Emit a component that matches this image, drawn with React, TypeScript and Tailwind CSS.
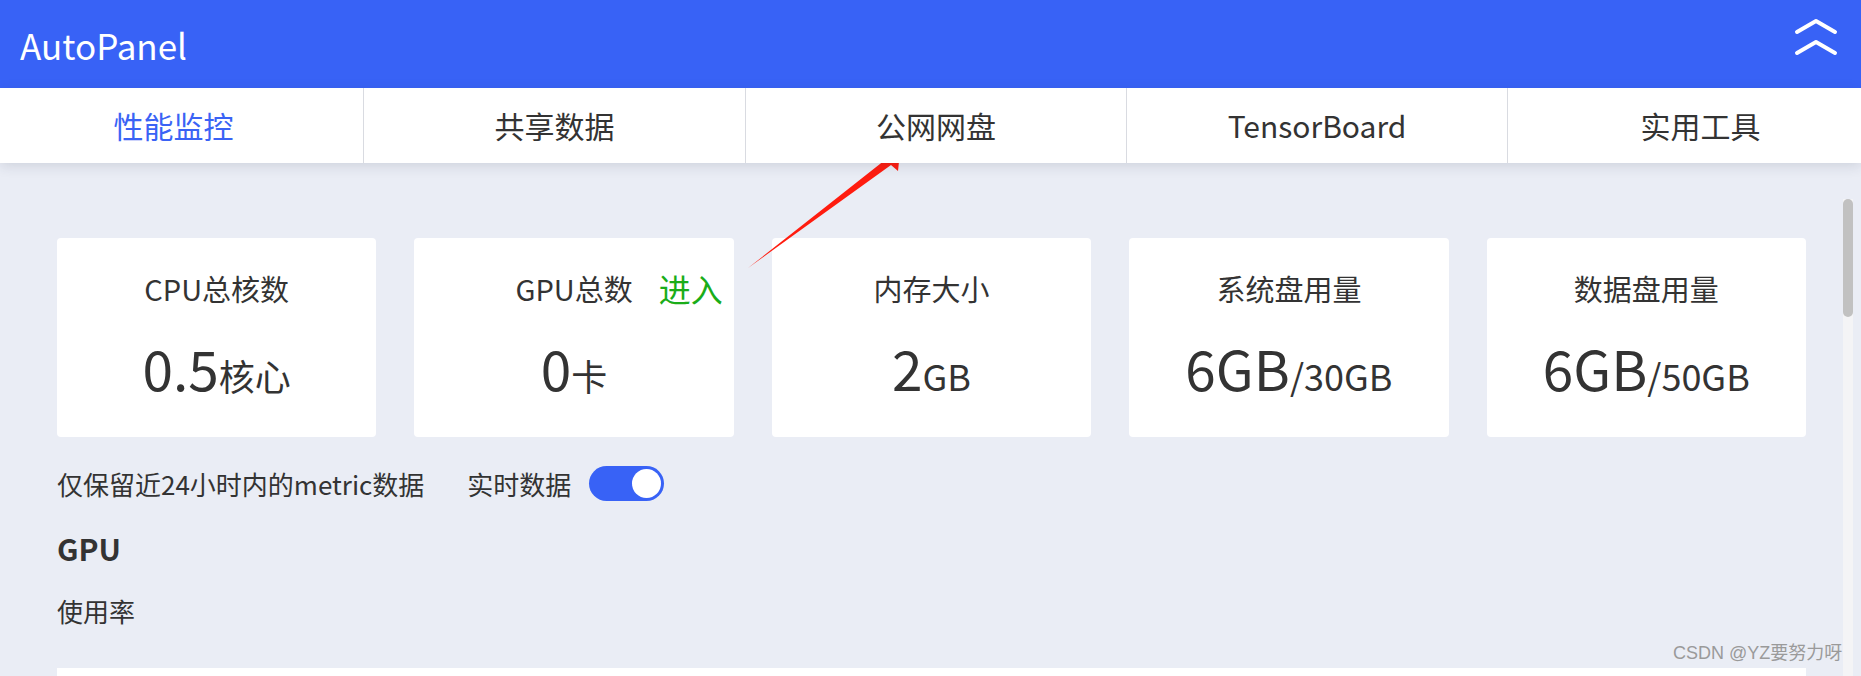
import React from "react";

const tabs = [
  { label: "性能监控", w: "w-[363px] pr-[16px]", active: true },
  { label: "共享数据", w: "w-[382px]" },
  { label: "公网网盘", w: "w-[381px]" },
  { label: "TensorBoard", w: "w-[381px]" },
  { label: "实用工具", w: "flex-1 pl-[32px]" },
];

const cards = [
  { title: "CPU总核数", value: "0.5", unit: "核心" },
  { title: "GPU总数", value: "0", unit: "卡", link: "进入" },
  { title: "内存大小", value: "2", unit: "GB" },
  { title: "系统盘用量", value: "6GB", unit: "/30GB" },
  { title: "数据盘用量", value: "6GB", unit: "/50GB" },
];

const StatCard = ({ title, value, unit, link }: { title: string; value: string; unit: string; link?: string }) => (
  <div className="h-[199px] bg-white rounded-[4px] flex flex-col items-center">
    <div className="relative mt-[30px] h-[40px] leading-[40px] text-[29px] text-[#333]">
      {title}
      {link && (
        <span className="absolute left-full top-0 ml-[26px] whitespace-nowrap text-[32px] text-[#1aad19]">{link}</span>
      )}
    </div>
    <div className="mt-[28px] flex items-baseline text-[#333]">
      <span className="text-[55px] leading-[62px]">{value}</span>
      <span className="text-[36px]">{unit}</span>
    </div>
  </div>
);

export default function App() {
  return (
    <div className="relative w-full h-[676px] overflow-hidden flex flex-col bg-[#eaedf5] font-['Noto_Sans_CJK_SC','Noto_Sans',sans-serif] text-[#333]">
      {/* header */}
      <div className="h-[88px] shrink-0 bg-[#3862f6] flex items-center justify-between pl-[20px] pr-[23px]">
        <span className="text-[35px] text-white leading-none">AutoPanel</span>
        <svg width="44" height="40" viewBox="0 0 44 40" className="self-start mt-[18px]" fill="none">
          <path d="M3 14 L22 3 L41 14" stroke="white" strokeWidth="4" strokeLinecap="round" strokeLinejoin="round" />
          <path d="M3 35 L22 24 L41 35" stroke="white" strokeWidth="4" strokeLinecap="round" strokeLinejoin="round" />
        </svg>
      </div>

      {/* tabs */}
      <div className="relative z-10 h-[75px] shrink-0 bg-white flex shadow-[0_3px_12px_rgba(40,50,80,0.14)]">
        {tabs.map((t, i) => (
          <div
            key={t.label}
            className={`${t.w} h-full flex items-center justify-center text-[30px] ${i > 0 ? "border-l border-[#d9dbe1]" : ""} ${t.active ? "text-[#3a63f5]" : "text-[#333]"}`}
          >
            {t.label}
          </div>
        ))}
      </div>

      {/* content */}
      <div className="flex-1 flex min-h-0">
        <div className="flex-1 pl-[57px] pt-[75px]">
          <div className="w-[1749px] grid grid-cols-5 gap-[38px]">
            {cards.map((c) => (
              <StatCard key={c.title} {...c} />
            ))}
          </div>

          <div className="mt-[28px] h-[36px] flex items-center text-[26px]">
            <span>仅保留近24小时内的metric数据</span>
            <span className="ml-[43px]">实时数据</span>
            <div className="ml-[18px] w-[75px] h-[35px] rounded-full bg-[#3862f6] flex items-center justify-end pr-[3px]">
              <div className="w-[29px] h-[29px] rounded-full bg-white" />
            </div>
          </div>

          <div className="mt-[26px] h-[42px] leading-[42px] text-[30px] font-bold">GPU</div>
          <div className="mt-[24px] h-[36px] leading-[36px] text-[26px]">使用率</div>

          <div className="mt-[39px] w-[1749px] h-[200px] bg-white" />
        </div>

        {/* scrollbar */}
        <div className="w-[18px] shrink-0 pt-[36px]">
          <div className="w-[10px] h-full bg-[#f4f4f6]">
            <div className="w-[10px] h-[118px] rounded-full bg-[#c1c1c1]" />
          </div>
        </div>
      </div>

      {/* red annotation arrow */}
      <svg className="absolute inset-0 pointer-events-none" width="1861" height="676" viewBox="0 0 1861 676">
        <polygon points="748,268 885,160 881,153 900,152 898,171 891,165" fill="#ff1c0f" />
      </svg>

      {/* watermark */}
      <span className="absolute left-[1673px] top-[641px] text-[18px] leading-[24px] text-[#9a9a9a] font-['Liberation_Sans','Noto_Sans_CJK_SC',sans-serif] whitespace-nowrap">
        CSDN @YZ要努力呀
      </span>
    </div>
  );
}
